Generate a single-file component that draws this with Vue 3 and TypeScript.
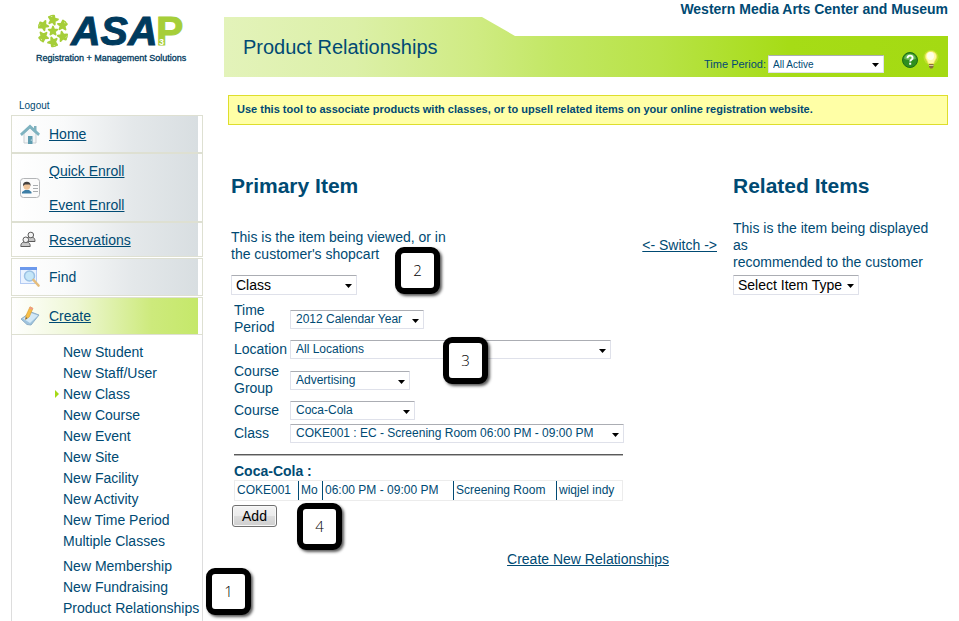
<script setup lang="ts">
import { reactive } from 'vue'

interface Field {
  id: string
  label: string
  value: string
  size: string
}

interface Marker {
  label: string
  place: string
}

const createGroups: string[][] = [
  [
    'New Student',
    'New Staff/User',
    'New Class',
    'New Course',
    'New Event',
    'New Site',
    'New Facility',
    'New Activity',
    'New Time Period',
    'Multiple Classes',
  ],
  ['New Membership', 'New Fundraising', 'Product Relationships'],
]

const fields: Field[] = reactive([
  { id: 'period', label: 'Time Period', value: '2012 Calendar Year', size: 'w-period' },
  { id: 'location', label: 'Location', value: 'All Locations', size: 'w-location' },
  { id: 'group', label: 'Course Group', value: 'Advertising', size: 'w-group' },
  { id: 'course', label: 'Course', value: 'Coca-Cola', size: 'w-course' },
  { id: 'class', label: 'Class', value: 'COKE001 : EC - Screening Room 06:00 PM - 09:00 PM', size: 'w-class' },
])

const session: string[] = ['COKE001', 'Mo', '06:00 PM - 09:00 PM', 'Screening Room', 'wiqjel indy']

const markers: Marker[] = [
  { label: '1', place: 'at-menu' },
  { label: '2', place: 'at-type' },
  { label: '3', place: 'at-fields' },
  { label: '4', place: 'at-add' },
]

const ring: number[] = [0, 60, 120, 180, 240, 300]
</script>

<template>
  <div class="page">
    <aside class="side">
      <svg class="logo" width="160" height="56" viewBox="0 0 160 56" role="img" aria-label="ASAP Registration + Management Solutions">
        <g transform="translate(20 23)" fill="#a6ce39" stroke="#a6ce39" stroke-width="1.800" stroke-linejoin="round">
          <path d="M0 -4.500 1.100 -1.500 4.300 -1.400 1.800 .6 2.600 3.600 0 1.900 -2.600 3.600 -1.800 .6 -4.300 -1.400 -1.100 -1.500Z" />
          <g v-for="a in ring" :key="a" :transform="`rotate(${a}) translate(0 -11) rotate(14)`">
            <path d="M0 -4.500 1.300 -1.700 4.700 -1.800 2 .7 2.800 4 0 2 -2.800 4 -2 .7 -4.700 -1.800 -1.300 -1.700Z" />
            <path d="M-4.700 -1.800Q-3 -4.200 0 -4.500" fill="none" stroke-width="1.400" />
          </g>
        </g>
        <text class="logo-word slanted" x="38" y="37" fill="#003a5d" stroke="#003a5d">ASA</text>
        <text class="logo-word" x="123" y="37" fill="#a6ce39" stroke="#a6ce39">P</text>
        <text class="logo-sub" x="126" y="37">3</text>
        <text class="logo-line" x="3" y="53">Registration + Management Solutions</text>
      </svg>

      <a class="logout" href="#">Logout</a>

      <nav class="menu">
        <div class="entry">
          <svg width="20" height="20" viewBox="0 0 20 20" aria-hidden="true">
            <path d="M4 9.500 10 4l6 5.500V19H4z" fill="#f4f6f7" stroke="#c9cfd3" />
            <path d="M14 2h2.500v5L14 5z" fill="#7fb0bd" />
            <path d="M10 .5 20 9.800 18.200 12 10 4.600 1.800 12 0 9.800z" fill="#7fb3c0" />
            <path d="M8 12h4.500v8H8z" fill="#5f9db0" />
            <circle cx="11.300" cy="16" r=".6" fill="#fff" />
          </svg>
          <a href="#">Home</a>
        </div>
        <div class="entry double">
          <svg width="20" height="20" viewBox="0 0 20 20" aria-hidden="true">
            <rect x=".5" y=".5" width="19" height="19" rx="3" fill="#fbfbfb" stroke="#b3b5b7" />
            <path d="M2 15.500v-1.500l3-2h4l2.500 2v1.500z" fill="#3d7ea6" />
            <circle cx="6.800" cy="8.300" r="3.400" fill="#f0c59a" />
            <path d="M3 8c-.3-3 1.500-4.300 3.800-4.300S10.900 5 10.600 8L9.500 6.500H5z" fill="#45413e" />
            <path d="M13 7.500h5M13 10.500h5M13 13.500h5" stroke="#a9adb0" />
          </svg>
          <div class="pair">
            <a href="#">Quick Enroll</a>
            <a href="#">Event Enroll</a>
          </div>
        </div>
        <div class="entry short">
          <svg width="20" height="20" viewBox="0 0 20 20" aria-hidden="true">
            <g stroke="#5b5b5b" stroke-width="1">
              <path d="M6 11.500c0-3.500 1.500-4.500 4.500-4.500s4.500 1 4.500 4.500z" fill="#c8c8c8" />
              <circle cx="10.800" cy="5" r="2.800" fill="#f3f3f3" />
              <path d="M.8 16.500c0-3.500 1.500-4.500 4.700-4.500s4.700 1 4.700 4.500z" fill="#c8c8c8" />
              <circle cx="5.800" cy="9.800" r="2.800" fill="#f3f3f3" />
            </g>
          </svg>
          <a href="#">Reservations</a>
        </div>
        <div class="entry apart">
          <svg width="20" height="20" viewBox="0 0 20 20" aria-hidden="true">
            <rect x=".5" y=".5" width="16" height="16" fill="#eaf3ff" stroke="#b4cbf3" />
            <path d="M0 0h17v3H0z" fill="#6c99ec" />
            <circle cx="9.500" cy="9" r="5" fill="#c4e6f8" stroke="#9cc2e4" stroke-width="1.500" />
            <path d="m13.500 13 5 5.500" stroke="#e5bd7c" stroke-width="2.600" stroke-linecap="round" />
          </svg>
          <a class="plain" href="#">Find</a>
        </div>
        <div class="entry apart current">
          <svg width="20" height="20" viewBox="0 0 20 20" aria-hidden="true">
            <path d="M1 13 11 6l8 3-8 10-4-.5z" fill="#9fc4de" stroke="#8fb0c8" />
            <path d="m3 12.500 8-5.500 7 2.500-8 7.500z" fill="#d3e9f7" />
            <path d="M5.500 13.500 6 9.500 10 .8l3 1.500-3.800 8.700z" fill="#f7bf45" stroke="#d99a2b" stroke-width=".6" />
            <path d="m10 .8 3 1.500-.8 1.700-3-1.500z" fill="#ef9a8c" />
            <path d="m5.500 13.500.4-2.200 1.500.8z" fill="#555" />
          </svg>
          <a href="#">Create</a>
        </div>
        <div class="submenu">
          <ul v-for="(group, g) in createGroups" :key="g">
            <li v-for="item in group" :key="item">
              <svg v-if="item === 'New Class'" class="pointer" width="4" height="8" viewBox="0 0 4 8" aria-hidden="true">
                <path d="M0 0 4 4 0 8z" fill="#a5d916" />
              </svg>
              <a href="#">{{ item }}</a>
            </li>
          </ul>
        </div>
      </nav>
    </aside>

    <main class="main">
      <div class="org">Western Media Arts Center and Museum</div>
      <header class="banner">
        <h1>Product Relationships</h1>
        <div class="tools">
          <label for="active">Time Period:</label>
          <span class="picker tiny">
            <select id="active" class="w-active"><option>All Active</option></select>
            <svg width="7" height="4" viewBox="0 0 7 4" aria-hidden="true"><path d="M0 0h7L3.500 4z" /></svg>
          </span>
          <button class="icon help" type="button" aria-label="Help">
            <svg width="16" height="16" viewBox="0 0 16 16" aria-hidden="true">
              <circle cx="8" cy="8" r="7.500" fill="#2f8f1f" stroke="#1f6e17" />
              <path d="M2 6.500a6.200 6.200 0 0 1 12 0c-3 2-9 2-12 0z" fill="#7cc763" opacity=".7" />
              <path d="M5.500 6.200C5.500 4.300 6.600 3.600 8 3.600s2.600.8 2.600 2.300C10.600 7.800 8.200 7.700 8.200 9.600" fill="none" stroke="#fff" stroke-width="1.900" />
              <rect x="7.200" y="10.700" width="2" height="2" fill="#fff" />
            </svg>
          </button>
          <button class="icon" type="button" aria-label="Tip">
            <svg width="16" height="20" viewBox="0 0 16 20" aria-hidden="true">
              <circle cx="8" cy="7.500" r="7.500" fill="#e6ec5a" opacity=".4" />
              <path d="M8 1.500c-3.500 0-5.500 2.300-5.500 5.200 0 2.500 2.300 4 2.800 6.800h5.400c.5-2.800 2.800-4.300 2.800-6.800C13.500 3.800 11.500 1.500 8 1.500z" fill="#fffaa8" stroke="#f8e868" stroke-width=".8" />
              <ellipse cx="7.500" cy="6" rx="3.500" ry="4" fill="#fffee8" />
              <path d="M6 14h4.500v3l-1.200 1.500H7.200L6 17z" fill="#8b6f3d" />
              <path d="M6 15.500h4.500" stroke="#d6cb9a" />
            </svg>
          </button>
        </div>
      </header>

      <p class="notice">Use this tool to associate products with classes, or to upsell related items on your online registration website.</p>

      <div class="columns">
        <h2 class="c1">Primary Item</h2>
        <h2 class="c3">Related Items</h2>

        <section class="intro c1">
          <p class="lead">This is the item being viewed, or in the customer's shopcart</p>
          <span class="picker large">
            <select class="w-type" aria-label="Primary item type"><option>Class</option></select>
            <svg width="7" height="4" viewBox="0 0 7 4" aria-hidden="true"><path d="M0 0h7L3.500 4z" /></svg>
          </span>
        </section>
        <a class="switch" href="#">&lt;- Switch -&gt;</a>
        <section class="intro c3">
          <p>This is the item being displayed as<br />recommended to the customer</p>
          <span class="picker large">
            <select class="w-type" aria-label="Related item type"><option>Select Item Type</option></select>
            <svg width="7" height="4" viewBox="0 0 7 4" aria-hidden="true"><path d="M0 0h7L3.500 4z" /></svg>
          </span>
        </section>

        <section class="details c1">
          <div class="form">
            <template v-for="f in fields" :key="f.id">
              <label :for="f.id">{{ f.label }}</label>
              <span class="picker">
                <select :id="f.id" v-model="f.value" :class="f.size"><option>{{ f.value }}</option></select>
                <svg width="7" height="4" viewBox="0 0 7 4" aria-hidden="true"><path d="M0 0h7L3.500 4z" /></svg>
              </span>
            </template>
          </div>
          <hr />
          <h3>Coca-Cola :</h3>
          <table>
            <colgroup>
              <col class="col-code" /><col class="col-day" /><col class="col-time" /><col class="col-room" /><col />
            </colgroup>
            <tbody>
              <tr><td v-for="cell in session" :key="cell">{{ cell }}</td></tr>
            </tbody>
          </table>
          <button class="add" type="button">Add</button>
        </section>
      </div>

      <div class="create"><a href="#">Create New Relationships</a></div>
    </main>

    <div v-for="m in markers" :key="m.label" class="marker" :class="m.place">{{ m.label }}</div>
  </div>
</template>

<style>
body {
  margin: 0;
  background: #fff;
}
</style>

<style scoped>
.page {
  position: relative;
  display: flex;
  box-sizing: border-box;
  min-height: 100vh;
  padding: 0 11px;
  color: #004a73;
  font-family: "Liberation Sans", Arial, sans-serif;
  font-size: 14px;
  line-height: 17px;
}
a {
  color: inherit;
}
h1, h2, h3, p, ul {
  margin: 0;
  padding: 0;
}

/* Sidebar */
.side {
  display: flex;
  flex-direction: column;
  flex: 0 0 192px;
}
.logo {
  display: block;
  margin: 8px 0 0 22px;
}
.logo-word {
  font-size: 41px;
  font-weight: bold;
  stroke-width: 1px;
}
.slanted {
  font-style: italic;
}
.logo-sub {
  font-size: 9px;
  font-weight: bold;
  fill: #fff;
}
.logo-line {
  font-size: 9px;
  fill: #003a5d;
  stroke: #003a5d;
  stroke-width: 0.3px;
}
.logout {
  margin: 35px 0 2px 8px;
  font-size: 10px;
  line-height: 14px;
  text-decoration: none;
}
.menu {
  display: flex;
  flex-direction: column;
  flex: 1;
}
.entry {
  display: flex;
  align-items: center;
  gap: 9px;
  box-sizing: border-box;
  height: 38px;
  padding-left: 8px;
  border: 1px solid #dee0d2;
  background: linear-gradient(to right, #fff 0%, #f9fafa 28%, #e4e8ea 65%, #d8dee1 100%) no-repeat 0 0 / calc(100% - 4px) 100%;
}
.entry svg {
  flex: none;
}
.double {
  height: 69px;
}
.pair {
  display: flex;
  flex-direction: column;
  gap: 17px;
}
.pair,
.short a {
  padding-top: 2px;
}
.short {
  height: 35px;
}
.apart {
  margin-top: 1px;
}
.current {
  background-image: linear-gradient(to right, #fff 0%, #eef7d4 35%, #cdea7c 75%, #c5e86a 100%);
}
.plain {
  text-decoration: none;
}
.submenu {
  flex: 1;
  border: solid #dddddd;
  border-width: 0 1px;
  padding-top: 7px;
}
.submenu ul {
  list-style: none;
}
.submenu ul + ul {
  margin-top: 4px;
}
.submenu li {
  position: relative;
  padding-left: 51px;
  line-height: 21px;
  white-space: nowrap;
}
.submenu a {
  text-decoration: none;
}
.pointer {
  position: absolute;
  left: 43px;
  top: 6px;
}

/* Main area */
.main {
  flex: 1;
  min-width: 0;
  margin-left: 21px;
}
.org {
  height: 17px;
  font-weight: bold;
  line-height: 19px;
  text-align: right;
}
.banner {
  display: flex;
  justify-content: space-between;
  align-items: center;
  box-sizing: border-box;
  height: 60px;
  padding: 0 9px 0 19px;
  background: linear-gradient(to right, #e3f3ba 0%, #dcf0a8 18%, #cfeb82 35%, #c2e763 46%, #b8e347 60%, #a6dc16 78%, #a4da12 100%);
  clip-path: polygon(0 0, 258px 0, 291px 19px, 100% 19px, 100% 100%, 0 100%);
}
h1 {
  font-size: 20px;
  font-weight: normal;
  line-height: 24px;
}
.tools {
  display: flex;
  align-items: center;
  align-self: flex-end;
  height: 36px;
  font-size: 11px;
}
.tools label {
  margin: 10px 2px 0 0;
}
.tools .tiny {
  margin-top: 10px;
}
.icon {
  display: block;
  margin: 1px 0 0 5px;
  padding: 0;
  border: 0;
  background: none;
  line-height: 0;
}
.help {
  margin-left: 18px;
}
.notice {
  margin: 18px 0 0 4px;
  padding: 6px 8px 7px;
  border: 1px solid #dede2c;
  background: #ffffa6;
  font-size: 11px;
  font-weight: bold;
  line-height: 15px;
}
.columns {
  display: grid;
  grid-template-columns: minmax(0, 1fr) auto 215px;
  column-gap: 16px;
  margin: 49px 0 0 7px;
}
.c1 {
  grid-column: 1;
}
.c3 {
  grid-column: 3;
}
h2 {
  grid-row: 1;
  font-size: 21px;
  line-height: 24px;
}
.intro {
  grid-row: 2;
  align-self: end;
  margin-top: 22px;
}
.intro p {
  max-width: 200px;
  margin-bottom: 4px;
}
.intro .lead {
  max-width: 220px;
  margin-bottom: 12px;
}
.switch {
  grid-column: 2;
  grid-row: 2;
  margin-top: 39px;
  white-space: nowrap;
}
.details {
  grid-row: 3;
  padding: 7px 3px 0;
}
.form {
  display: grid;
  grid-template-columns: 52px 1fr;
  gap: 4px;
  align-items: center;
}

/* Drop-downs */
.picker {
  position: relative;
  display: inline-block;
  max-width: 100%;
  justify-self: start;
  font-size: 12px;
  line-height: 0;
}
.picker select {
  appearance: none;
  box-sizing: border-box;
  max-width: 100%;
  height: 19px;
  margin: 0;
  padding: 0 14px 0 5px;
  border: 1px solid #dfe1ea;
  border-top-color: #abadb3;
  border-radius: 1px;
  background: #fff;
  color: #004a73;
  font: inherit;
  line-height: 15px;
}
.picker svg {
  position: absolute;
  right: 5px;
  bottom: 6px;
  pointer-events: none;
}
.tiny select {
  height: 18px;
  padding-left: 4px;
  font-size: 10px;
}
.large select {
  height: 20px;
  padding-left: 4px;
  color: #000;
  font-size: 14px;
  line-height: 18px;
}
.large svg {
  bottom: 7px;
}
.w-active { width: 116px; }
.w-type { width: 126px; }
.w-period { width: 134px; }
.w-location { width: 321px; }
.w-group { width: 120px; }
.w-course { width: 125px; }
.w-class { width: 334px; }

hr {
  height: 1px;
  margin: 11px 0 7px;
  border: 0;
  border-bottom: 1px solid #b5b5b5;
  background: #5a5a5a;
}
h3 {
  font-size: 14px;
  line-height: 17px;
}
table {
  width: 100%;
  table-layout: fixed;
  border: 1px solid #ececec;
  border-spacing: 0;
  font-size: 12px;
  line-height: 19px;
}
td {
  padding: 0 2px;
  white-space: nowrap;
}
td + td {
  border-left: 1px solid #004a73;
}
.col-code { width: 63px; }
.col-day { width: 24px; }
.col-time { width: 131px; }
.col-room { width: 103px; }
.add {
  display: block;
  width: 45px;
  height: 22px;
  margin: 4px 0 0 -2px;
  padding: 0;
  border: 1px solid #707070;
  border-radius: 3px;
  background: linear-gradient(#f3f3f3 0%, #ebebeb 50%, #dddddd 51%, #cfcfcf 100%);
  box-shadow: inset 0 0 0 1px #f8f8f8;
  color: #000;
  font: 14px/18px "Liberation Sans", Arial, sans-serif;
}
.create {
  margin: 24px 0 0 4px;
  text-align: center;
}

/* Numbered callouts floating over the page */
.marker {
  position: absolute;
  box-sizing: border-box;
  width: 45px;
  height: 47px;
  border: 6px solid #000;
  border-radius: 9px;
  background: #fff;
  box-shadow: 2px 2px 3px rgba(0, 0, 0, 0.65);
  color: #000;
  font: 300 15px/35px "Open Sans", "Noto Sans", sans-serif;
  text-align: center;
}
.at-menu { left: 206px; top: 568px; }
.at-type { left: 395px; top: 247px; }
.at-fields { left: 443px; top: 337px; }
.at-add { left: 297px; top: 503px; }
</style>
